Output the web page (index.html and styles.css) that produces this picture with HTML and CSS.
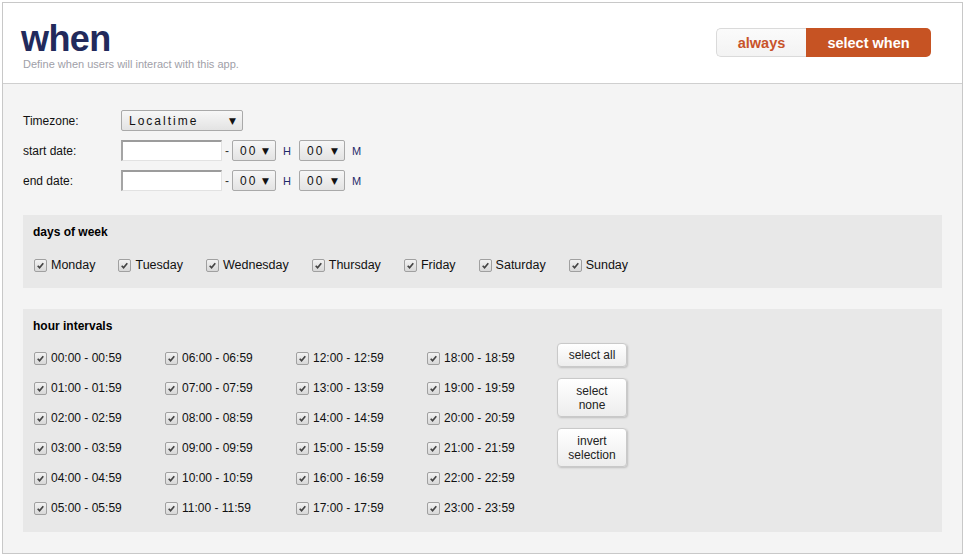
FILE: index.html
```html
<!DOCTYPE html>
<html>
<head>
<meta charset="utf-8">
<link rel="stylesheet" href="styles.css">
</head>
<body>
<div class="frame">
  <header class="header">
    <div class="heading">
      <h1 class="title">when</h1>
      <p class="subtitle">Define when users will interact with this app.</p>
    </div>
    <div class="toggle">
      <span class="tog tog-off">always</span>
      <span class="tog tog-on">select when</span>
    </div>
  </header>
  <main class="content">
    <div class="form">
      <div class="row">
        <span class="label">Timezone:</span>
        <span class="select sel-tz">Localtime<span class="arrow">▼</span></span>
      </div>
      <div class="row">
        <span class="label">start date:</span>
        <span class="input"></span>
        <span class="dash">-</span>
        <span class="select sel-h">00<span class="arrow">▼</span></span>
        <span class="unit">H</span>
        <span class="select sel-m">00<span class="arrow">▼</span></span>
        <span class="unit">M</span>
      </div>
      <div class="row">
        <span class="label">end date:</span>
        <span class="input"></span>
        <span class="dash">-</span>
        <span class="select sel-h">00<span class="arrow">▼</span></span>
        <span class="unit">H</span>
        <span class="select sel-m">00<span class="arrow">▼</span></span>
        <span class="unit">M</span>
      </div>
    </div>

    <section class="panel days">
      <h2 class="panel-title">days of week</h2>
      <div class="day-list">
        <label class="item"><span class="cb"><svg viewBox="0 0 13 13"><path d="M3.2 6.8 L5.4 9.2 L9.8 3.8"/></svg></span>Monday</label>
        <label class="item"><span class="cb"><svg viewBox="0 0 13 13"><path d="M3.2 6.8 L5.4 9.2 L9.8 3.8"/></svg></span>Tuesday</label>
        <label class="item"><span class="cb"><svg viewBox="0 0 13 13"><path d="M3.2 6.8 L5.4 9.2 L9.8 3.8"/></svg></span>Wednesday</label>
        <label class="item"><span class="cb"><svg viewBox="0 0 13 13"><path d="M3.2 6.8 L5.4 9.2 L9.8 3.8"/></svg></span>Thursday</label>
        <label class="item"><span class="cb"><svg viewBox="0 0 13 13"><path d="M3.2 6.8 L5.4 9.2 L9.8 3.8"/></svg></span>Friday</label>
        <label class="item"><span class="cb"><svg viewBox="0 0 13 13"><path d="M3.2 6.8 L5.4 9.2 L9.8 3.8"/></svg></span>Saturday</label>
        <label class="item"><span class="cb"><svg viewBox="0 0 13 13"><path d="M3.2 6.8 L5.4 9.2 L9.8 3.8"/></svg></span>Sunday</label>
      </div>
    </section>

    <section class="panel hours">
      <h2 class="panel-title">hour intervals</h2>
      <div class="hour-grid">
        <label class="hitem"><span class="cb"><svg viewBox="0 0 13 13"><path d="M3.2 6.8 L5.4 9.2 L9.8 3.8"/></svg></span>00:00 - 00:59</label>
        <label class="hitem"><span class="cb"><svg viewBox="0 0 13 13"><path d="M3.2 6.8 L5.4 9.2 L9.8 3.8"/></svg></span>01:00 - 01:59</label>
        <label class="hitem"><span class="cb"><svg viewBox="0 0 13 13"><path d="M3.2 6.8 L5.4 9.2 L9.8 3.8"/></svg></span>02:00 - 02:59</label>
        <label class="hitem"><span class="cb"><svg viewBox="0 0 13 13"><path d="M3.2 6.8 L5.4 9.2 L9.8 3.8"/></svg></span>03:00 - 03:59</label>
        <label class="hitem"><span class="cb"><svg viewBox="0 0 13 13"><path d="M3.2 6.8 L5.4 9.2 L9.8 3.8"/></svg></span>04:00 - 04:59</label>
        <label class="hitem"><span class="cb"><svg viewBox="0 0 13 13"><path d="M3.2 6.8 L5.4 9.2 L9.8 3.8"/></svg></span>05:00 - 05:59</label>
        <label class="hitem"><span class="cb"><svg viewBox="0 0 13 13"><path d="M3.2 6.8 L5.4 9.2 L9.8 3.8"/></svg></span>06:00 - 06:59</label>
        <label class="hitem"><span class="cb"><svg viewBox="0 0 13 13"><path d="M3.2 6.8 L5.4 9.2 L9.8 3.8"/></svg></span>07:00 - 07:59</label>
        <label class="hitem"><span class="cb"><svg viewBox="0 0 13 13"><path d="M3.2 6.8 L5.4 9.2 L9.8 3.8"/></svg></span>08:00 - 08:59</label>
        <label class="hitem"><span class="cb"><svg viewBox="0 0 13 13"><path d="M3.2 6.8 L5.4 9.2 L9.8 3.8"/></svg></span>09:00 - 09:59</label>
        <label class="hitem"><span class="cb"><svg viewBox="0 0 13 13"><path d="M3.2 6.8 L5.4 9.2 L9.8 3.8"/></svg></span>10:00 - 10:59</label>
        <label class="hitem"><span class="cb"><svg viewBox="0 0 13 13"><path d="M3.2 6.8 L5.4 9.2 L9.8 3.8"/></svg></span>11:00 - 11:59</label>
        <label class="hitem"><span class="cb"><svg viewBox="0 0 13 13"><path d="M3.2 6.8 L5.4 9.2 L9.8 3.8"/></svg></span>12:00 - 12:59</label>
        <label class="hitem"><span class="cb"><svg viewBox="0 0 13 13"><path d="M3.2 6.8 L5.4 9.2 L9.8 3.8"/></svg></span>13:00 - 13:59</label>
        <label class="hitem"><span class="cb"><svg viewBox="0 0 13 13"><path d="M3.2 6.8 L5.4 9.2 L9.8 3.8"/></svg></span>14:00 - 14:59</label>
        <label class="hitem"><span class="cb"><svg viewBox="0 0 13 13"><path d="M3.2 6.8 L5.4 9.2 L9.8 3.8"/></svg></span>15:00 - 15:59</label>
        <label class="hitem"><span class="cb"><svg viewBox="0 0 13 13"><path d="M3.2 6.8 L5.4 9.2 L9.8 3.8"/></svg></span>16:00 - 16:59</label>
        <label class="hitem"><span class="cb"><svg viewBox="0 0 13 13"><path d="M3.2 6.8 L5.4 9.2 L9.8 3.8"/></svg></span>17:00 - 17:59</label>
        <label class="hitem"><span class="cb"><svg viewBox="0 0 13 13"><path d="M3.2 6.8 L5.4 9.2 L9.8 3.8"/></svg></span>18:00 - 18:59</label>
        <label class="hitem"><span class="cb"><svg viewBox="0 0 13 13"><path d="M3.2 6.8 L5.4 9.2 L9.8 3.8"/></svg></span>19:00 - 19:59</label>
        <label class="hitem"><span class="cb"><svg viewBox="0 0 13 13"><path d="M3.2 6.8 L5.4 9.2 L9.8 3.8"/></svg></span>20:00 - 20:59</label>
        <label class="hitem"><span class="cb"><svg viewBox="0 0 13 13"><path d="M3.2 6.8 L5.4 9.2 L9.8 3.8"/></svg></span>21:00 - 21:59</label>
        <label class="hitem"><span class="cb"><svg viewBox="0 0 13 13"><path d="M3.2 6.8 L5.4 9.2 L9.8 3.8"/></svg></span>22:00 - 22:59</label>
        <label class="hitem"><span class="cb"><svg viewBox="0 0 13 13"><path d="M3.2 6.8 L5.4 9.2 L9.8 3.8"/></svg></span>23:00 - 23:59</label>
        <div class="actions">
          <button class="btn btn-one">select all</button>
          <button class="btn">select<br>none</button>
          <button class="btn">invert<br>selection</button>
        </div>
      </div>
    </section>
  </main>
</div>
</body>
</html>
```

FILE: styles.css
```css
* { box-sizing: border-box; }

body {
  margin: 0;
  padding: 2px;
  background: #ffffff;
  font-family: "Liberation Sans", Arial, sans-serif;
  font-size: 12px;
  color: #111;
}

.frame {
  width: 961px;
  height: 552px;
  border: 1px solid #c8c8c8;
  background: #f4f4f4;
  display: flex;
  flex-direction: column;
}

.header {
  background: #ffffff;
  border-bottom: 1px solid #cfcfcf;
  display: flex;
  justify-content: space-between;
  align-items: flex-start;
  padding: 18px 31px 12px 18px;
}

.title {
  margin: 0;
  font-size: 36px;
  line-height: 36px;
  font-weight: bold;
  letter-spacing: -0.6px;
  color: #222a5c;
}

.subtitle {
  margin: 1px 0 0 2px;
  font-size: 11px;
  line-height: 13px;
  color: #a0a0a8;
}

.toggle {
  display: flex;
  margin-top: 7px;
  height: 29px;
}

.tog {
  display: flex;
  align-items: center;
  justify-content: center;
  font-size: 14.5px;
  font-weight: bold;
}

.tog-off {
  width: 90px;
  border: 1px solid #dadada;
  border-right: none;
  border-radius: 5px 0 0 5px;
  background: linear-gradient(#fbfbfb, #f3f3f3);
  color: #c8532a;
}

.tog-on {
  width: 125px;
  border-radius: 0 5px 5px 0;
  background: #c65323;
  color: #ffffff;
}

.content {
  padding: 26px 20px 0 20px;
}

.form {
  display: flex;
  flex-direction: column;
  gap: 9px;
}

.row {
  display: flex;
  align-items: center;
  height: 21px;
}

.label {
  width: 98px;
  color: #111;
}

.select {
  position: relative;
  display: flex;
  align-items: center;
  height: 21px;
  border: 1px solid #a9a9a9;
  border-radius: 2px;
  background: linear-gradient(#f7f7f7, #e3e3e3);
  padding-left: 7px;
  letter-spacing: 2px;
  font-size: 12px;
  color: #111;
}

.arrow {
  position: absolute;
  right: 6px;
  top: 4px;
  font-size: 9px;
  letter-spacing: 0;
  font-family: "DejaVu Sans", sans-serif;
  line-height: 12px;
}

.sel-tz { width: 122px; }
.sel-h { width: 44px; }
.sel-m { width: 46px; }

.input {
  width: 101px;
  height: 21px;
  background: #ffffff;
  border-top: 2px solid #9c9c9c;
  border-left: 2px solid #a4a4a4;
  border-right: 1px solid #e2e2e2;
  border-bottom: 1px solid #e2e2e2;
}

.dash {
  width: 10px;
  text-align: center;
  color: #333;
}

.unit {
  font-size: 11px;
  color: #1e2a6a;
  padding: 0 8px 0 7px;
}

.panel {
  background: #e8e8e8;
  padding: 9px 10px 0 10px;
}

.panel-title {
  margin: 0;
  font-size: 12px;
  line-height: 16px;
  font-weight: bold;
  color: #000;
}

.days {
  margin-top: 24px;
  height: 73px;
}

.day-list {
  display: flex;
  gap: 22px;
  margin-top: 17px;
}

.item, .hitem {
  display: flex;
  align-items: center;
  line-height: 16px;
  color: #111;
}

.item {
  font-size: 12.5px;
}

.cb {
  width: 13px;
  height: 13px;
  margin: 0 4px 0 1px;
  border: 1px solid #a0a0a0;
  border-radius: 2px;
  background: linear-gradient(#f2f2f2, #d8d8d8);
  display: flex;
}

.cb svg {
  width: 11px;
  height: 11px;
}

.cb path {
  fill: none;
  stroke: #444;
  stroke-width: 2;
}

.hours {
  margin-top: 21px;
  height: 223px;
}

.hour-grid {
  margin-top: 9px;
  display: grid;
  grid-template-columns: repeat(4, 131px) 70px;
  grid-template-rows: repeat(6, 30px);
  grid-auto-flow: column;
}

.hitem {
  height: 30px;
}

.actions {
  grid-column: 5;
  grid-row: 1 / span 6;
  display: flex;
  flex-direction: column;
  gap: 11px;
  padding-top: 0;
}

.btn {
  width: 70px;
  height: 39px;
  border: 1px solid #c9c9c9;
  border-radius: 4px;
  background: linear-gradient(#ffffff, #ededed);
  box-shadow: 1px 1px 2px rgba(0, 0, 0, 0.18);
  font-family: "Liberation Sans", Arial, sans-serif;
  font-size: 12px;
  line-height: 14px;
  color: #222;
  padding: 0;
}

.btn-one {
  height: 24px;
}
```
